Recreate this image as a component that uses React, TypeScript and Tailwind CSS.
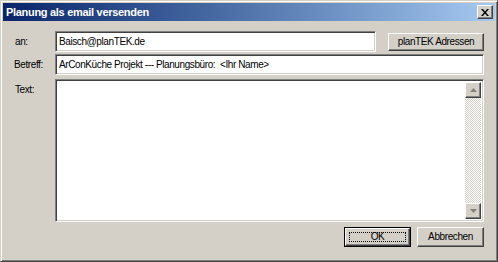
const raised =
  "border border-t-white border-l-white border-r-[#404040] border-b-[#404040] shadow-[inset_-1px_-1px_0_#808080,inset_1px_1px_0_#d4d0c8]";
const sunken =
  "border border-t-[#808080] border-l-[#808080] border-r-white border-b-white shadow-[inset_1px_1px_0_#404040,inset_-1px_-1px_0_#d4d0c8]";

function Field({ value, className }: { value: string; className?: string }) {
  return (
    <div className={`${sunken} bg-white h-[21px] flex items-center pl-[3px] whitespace-pre ${className ?? ""}`}>
      {value}
    </div>
  );
}

function Arrow({ up }: { up?: boolean }) {
  return (
    <div className={`${raised} bg-[#d4d0c8] w-[16px] h-[16px] flex items-center justify-center`}>
      <svg width="7" height="4" viewBox="0 0 7 4">
        <path d={up ? "M3.5 0 L7 4 L0 4 Z" : "M0 0 L7 0 L3.5 4 Z"} fill="#808080" />
      </svg>
    </div>
  );
}

export default function App() {
  return (
    <div
      className="w-[498px] h-[262px] bg-[#d4d0c8] border border-t-[#d4d0c8] border-l-[#d4d0c8] border-r-[#404040] border-b-[#404040] shadow-[inset_1px_1px_0_#fff,inset_-1px_-1px_0_#808080] p-[2px] flex flex-col"
      style={{ fontFamily: '"Liberation Sans", Arial, sans-serif' }}
    >
      {/* title bar */}
      <div className="h-[18px] bg-gradient-to-r from-[#0a246a] to-[#a6caf0] flex items-center justify-between pl-[3px] pr-[2px]">
        <span className="text-white font-bold text-[11px] tracking-[-0.3px]">Planung als email versenden</span>
        <div className={`${raised} bg-[#d4d0c8] w-[16px] h-[14px] flex items-center justify-center`}>
          <svg width="8" height="7" viewBox="0 0 8 7">
            <path d="M0 0 L2 0 L4 2.5 L6 0 L8 0 L5 3.5 L8 7 L6 7 L4 4.5 L2 7 L0 7 L3 3.5 Z" fill="#000" />
          </svg>
        </div>
      </div>

      <div className="flex-1 flex flex-col pl-[11px] pr-[11px] pt-[10px] text-[10px] tracking-[-0.4px] text-black">
        <div className="flex items-center">
          <span className="w-[41px] pl-[1px]">an:</span>
          <Field value="Baisch@planTEK.de" className="w-[321px]" />
          <button className={`${raised} bg-[#d4d0c8] ml-auto w-[96px] h-[18px] leading-none`}>
            planTEK Adressen
          </button>
        </div>

        <div className="flex items-center mt-[2px]">
          <span className="w-[41px]">Betreff:</span>
          <Field value="ArConKüche Projekt --- Planungsbüro:  <Ihr Name>" className="flex-1" />
        </div>

        <div className="flex mt-[4px]">
          <span className="w-[41px] pl-[1px] pt-[3px]">Text:</span>
          <div className={`${sunken} bg-white flex-1 h-[143px] flex justify-end p-[2px]`}>
            <div className="w-[16px] flex flex-col bg-[repeating-conic-gradient(#d4d0c8_0_25%,#ffffff_0_50%)] bg-[length:2px_2px]">
              <Arrow up />
              <div className="flex-1" />
              <Arrow />
            </div>
          </div>
        </div>

        <div className="flex justify-end gap-[6px] mt-[5px]">
          <button className="border border-black w-[67px] h-[20px]">
            <div className={`${raised} bg-[#d4d0c8] w-full h-full flex items-center justify-center p-[3px]`}>
              <div className="w-full h-full border border-dotted border-black flex items-center justify-center leading-none">
                OK
              </div>
            </div>
          </button>
          <button className={`${raised} bg-[#d4d0c8] w-[67px] h-[20px] leading-none`}>
            Abbrechen
          </button>
        </div>
      </div>
    </div>
  );
}
